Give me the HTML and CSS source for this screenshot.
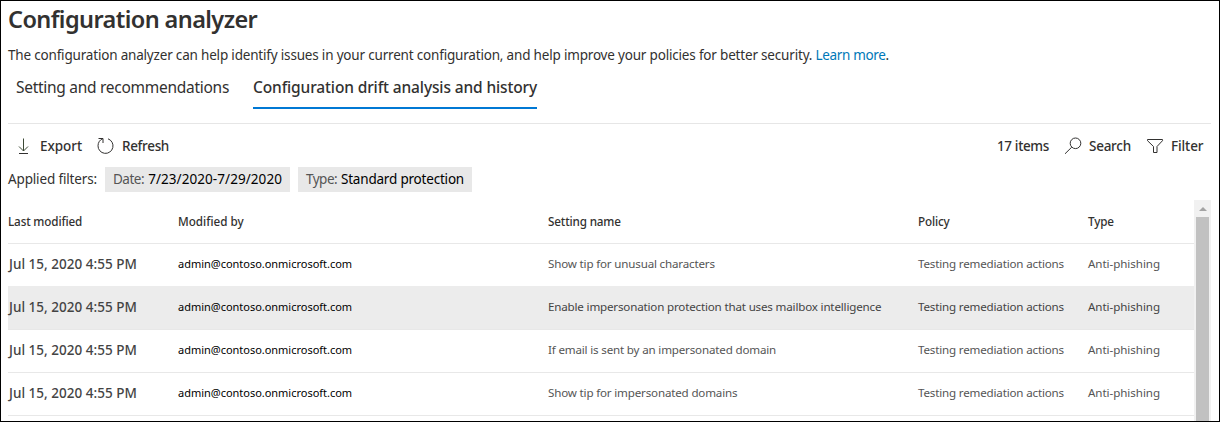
FILE: index.html
```
<!DOCTYPE html>
<html lang="en">
<head>
<meta charset="utf-8">
<title>Configuration analyzer</title>
<link rel="stylesheet" href="styles.css">
</head>
<body>
<main class="page">
  <h1 class="title">Configuration analyzer</h1>
  <p class="intro">The configuration analyzer can help identify issues in your current configuration, and help improve your policies for better security. <a class="link" href="#">Learn more</a>.</p>
  <nav class="tabs">
    <a class="tab">Setting and recommendations</a>
    <a class="tab tab-active">Configuration drift analysis and history</a>
  </nav>
  <div class="toolbar">
    <button class="command export">
      <svg class="icon" viewBox="0 0 18 18"><path class="down" d="M9.500 1.500V14M5 9.500l4.500 4.500L14 9.500"/><path d="M5 16.500h9"/></svg>
      <span class="label">Export</span>
    </button>
    <button class="command refresh">
      <svg class="icon" viewBox="0 0 18 18"><path d="M2.500 1.500H7V6M7 1.500C4 2.600 2 5.400 2 8.800a7.500 7.500 0 1 0 10-7"/></svg>
      <span class="label">Refresh</span>
    </button>
    <span class="count">17 items</span>
    <button class="command search">
      <svg class="icon" viewBox="0 0 18 18"><circle cx="11.500" cy="6.300" r="5.300"/><path d="M7.800 10.100L1 16.800"/></svg>
      <span class="label">Search</span>
    </button>
    <button class="command filter">
      <svg class="icon" viewBox="0 0 18 18"><path d="M1.500 2.500h15v1.200L11 9.500v6H7.500v-6L1.500 3.700z"/></svg>
      <span class="label">Filter</span>
    </button>
  </div>
  <div class="filters">
    <span class="filters-label">Applied filters:</span>
    <span class="chip chip-date"><span class="chip-key">Date:</span><span class="chip-value value-date">7/23/2020-7/29/2020</span></span>
    <span class="chip chip-type"><span class="chip-key">Type:</span><span class="chip-value">Standard protection</span></span>
  </div>
  <div class="list">
    <div class="table">
      <div class="row head"><span>Last modified</span><span class="plain">Modified by</span><span>Setting name</span><span>Policy</span><span>Type</span></div>
      <div class="row"><span class="date">Jul 15, 2020 4:55 PM</span><span class="user">admin@contoso.onmicrosoft.com</span><span>Show tip for unusual characters</span><span>Testing remediation actions</span><span class="type">Anti-phishing</span></div>
      <div class="row hovered"><span class="date">Jul 15, 2020 4:55 PM</span><span class="user">admin@contoso.onmicrosoft.com</span><span>Enable impersonation protection that uses mailbox intelligence</span><span>Testing remediation actions</span><span class="type">Anti-phishing</span></div>
      <div class="row"><span class="date">Jul 15, 2020 4:55 PM</span><span class="user">admin@contoso.onmicrosoft.com</span><span>If email is sent by an impersonated domain</span><span>Testing remediation actions</span><span class="type">Anti-phishing</span></div>
      <div class="row"><span class="date">Jul 15, 2020 4:55 PM</span><span class="user">admin@contoso.onmicrosoft.com</span><span>Show tip for impersonated domains</span><span>Testing remediation actions</span><span class="type">Anti-phishing</span></div>
    </div>
    <div class="scrollbar"><div class="arrow"></div><div class="thumb"></div></div>
  </div>
</main>
</body>
</html>
```
FILE: styles.css
```
* { box-sizing: border-box; }
body { margin: 0; background: #fff; }
.page {
  width: 1220px; height: 422px; padding: 0 8px 0 7px;
  border: 1px solid #000; overflow: hidden;
  display: flex; flex-direction: column;
  font: 13.500px "Noto Sans", sans-serif; color: #323130; white-space: nowrap;
}
.title { margin: 0; height: 42px; font-size: 23.500px; line-height: 36px; font-weight: 600; letter-spacing: -.59px; }
.intro { margin: 0; height: 26px; line-height: 25px; letter-spacing: -.186px; }
.link { color: #0078b8; text-decoration: none; letter-spacing: -.34px; }
.tabs { display: flex; gap: 24px; height: 55px; padding-left: 8px; border-bottom: 1px solid #e6e6e6; }
.tab { width: 213px; height: 40px; line-height: 37px; font-size: 15.500px; letter-spacing: -.28px; }
.tab-active { width: 284px; font-weight: 500; letter-spacing: -.13px; border-bottom: 2px solid #0078d4; }
.toolbar { display: flex; align-items: center; height: 43px; padding: 1px 8px 0 6px; font-weight: 500; }
.command { display: flex; align-items: center; padding: 0; border: 0; background: none; font: inherit; color: inherit; letter-spacing: -.33px; }
.icon { width: 18px; height: 18px; flex: none; fill: none; stroke: #323130; stroke-width: 1; }
.down { stroke: #3c4a35; }
.export { width: 82px; gap: 8px; letter-spacing: -.05px; }
.refresh { gap: 8px; }
.count { width: 67px; margin-left: auto; letter-spacing: -.36px; }
.search { width: 82px; gap: 7px; letter-spacing: -.26px; }
.filter { width: 57px; gap: 7px; letter-spacing: -.1px; }
.filters { display: flex; gap: 8px; height: 33px; align-items: flex-start; line-height: 25px; }
.filters-label { width: 89px; letter-spacing: -.15px; }
.chip { display: flex; justify-content: space-between; height: 25px; padding: 0 8px; background: #e8e8e8; color: #000; }
.chip-date { width: 185px; }
.chip-type { width: 174px; }
.chip-key { color: #555; letter-spacing: -.5px; }
.chip-value { letter-spacing: -.2px; }
.value-date { letter-spacing: .07px; }
.list { display: flex; flex: 1; min-height: 0; }
.table { width: 1186px; }
.row { display: grid; grid-template-columns: 170px 370px 370px 170px 106px; align-items: center; height: 43px; padding-bottom: 3px; border-bottom: 1px solid #e8e8e8; font-size: 11.600px; letter-spacing: -.175px; color: #555; }
.head { height: 44px; padding-bottom: 2px; font-size: 11.700px; font-weight: 500; letter-spacing: -.15px; color: #323130; }
.plain { letter-spacing: 0; }
.hovered { background: #ececec; color: #444; box-shadow: 0 -1px #ececec; }
.date { font-size: 13.500px; font-weight: 500; letter-spacing: .02px; padding-left: 1px; color: #444; }
.user { font-size: 11px; letter-spacing: -.02px; color: #000; }
.type { letter-spacing: -.06px; }
.scrollbar { width: 17px; padding: 7px 2px 0; background: #f1f1f1; display: flex; flex-direction: column; align-items: center; }
.arrow { border: 4px solid transparent; border-top: 0; border-bottom: 4px solid #a3a3a3; margin-bottom: 6px; }
.thumb { flex: 1; width: 13px; background: #c1c1c1; }
```
